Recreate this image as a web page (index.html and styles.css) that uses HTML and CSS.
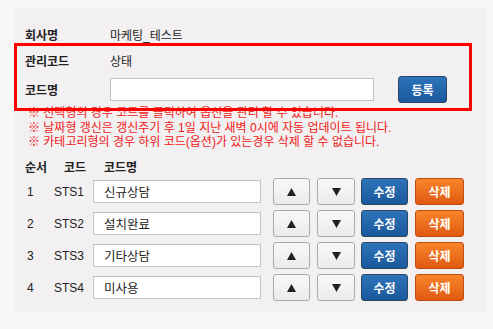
FILE: index.html
```html
<!DOCTYPE html>
<html lang="ko">
<head>
<meta charset="utf-8">
<link rel="stylesheet" href="styles.css">
</head>
<body>
<div class="panel">
  <div class="info-row r1">
    <span class="label">회사명</span>
    <span class="value">마케팅_테스트</span>
  </div>
  <div class="info-row r2">
    <span class="label">관리코드</span>
    <span class="value">상태</span>
  </div>
  <div class="info-row r3">
    <span class="label">코드명</span>
    <input class="field name-field" type="text">
    <button class="btn btn-blue btn-reg">등록</button>
  </div>
  <div class="notes">
    <p>※ 선택형의 경우 코드를 클릭하여 옵션을 관리 할 수 있습니다.</p>
    <p>※ 날짜형 갱신은 갱신주기 후 1일 지난 새벽 0시에 자동 업데이트 됩니다.</p>
    <p>※ 카테고리형의 경우 하위 코드(옵션)가 있는경우 삭제 할 수 없습니다.</p>
  </div>
  <div class="list-head">
    <span class="h-num">순서</span>
    <span class="h-code">코드</span>
    <span class="h-name">코드명</span>
  </div>
  <div class="list">
    <div class="list-row">
      <span class="c-num">1</span><span class="c-code">STS1</span>
      <input class="field row-field" type="text" value="신규상담">
      <button class="btn btn-gray btn-up"><svg width="9" height="8" viewBox="0 0 9 8"><polygon points="4.5,0 9,8 0,8" fill="#222"/></svg></button>
      <button class="btn btn-gray btn-down"><svg width="9" height="8" viewBox="0 0 9 8"><polygon points="0,0 9,0 4.5,8" fill="#222"/></svg></button>
      <button class="btn btn-blue btn-edit">수정</button>
      <button class="btn btn-orange btn-del">삭제</button>
    </div>
    <div class="list-row">
      <span class="c-num">2</span><span class="c-code">STS2</span>
      <input class="field row-field" type="text" value="설치완료">
      <button class="btn btn-gray btn-up"><svg width="9" height="8" viewBox="0 0 9 8"><polygon points="4.5,0 9,8 0,8" fill="#222"/></svg></button>
      <button class="btn btn-gray btn-down"><svg width="9" height="8" viewBox="0 0 9 8"><polygon points="0,0 9,0 4.5,8" fill="#222"/></svg></button>
      <button class="btn btn-blue btn-edit">수정</button>
      <button class="btn btn-orange btn-del">삭제</button>
    </div>
    <div class="list-row">
      <span class="c-num">3</span><span class="c-code">STS3</span>
      <input class="field row-field" type="text" value="기타상담">
      <button class="btn btn-gray btn-up"><svg width="9" height="8" viewBox="0 0 9 8"><polygon points="4.5,0 9,8 0,8" fill="#222"/></svg></button>
      <button class="btn btn-gray btn-down"><svg width="9" height="8" viewBox="0 0 9 8"><polygon points="0,0 9,0 4.5,8" fill="#222"/></svg></button>
      <button class="btn btn-blue btn-edit">수정</button>
      <button class="btn btn-orange btn-del">삭제</button>
    </div>
    <div class="list-row">
      <span class="c-num">4</span><span class="c-code">STS4</span>
      <input class="field row-field" type="text" value="미사용">
      <button class="btn btn-gray btn-up"><svg width="9" height="8" viewBox="0 0 9 8"><polygon points="4.5,0 9,8 0,8" fill="#222"/></svg></button>
      <button class="btn btn-gray btn-down"><svg width="9" height="8" viewBox="0 0 9 8"><polygon points="0,0 9,0 4.5,8" fill="#222"/></svg></button>
      <button class="btn btn-blue btn-edit">수정</button>
      <button class="btn btn-orange btn-del">삭제</button>
    </div>
  </div>
  <div class="highlight"></div>
</div>
</body>
</html>
```

FILE: styles.css
```css
html, body {
  margin: 0;
  padding: 0;
}
body {
  background: #f7f6f6;
  font-family: "Liberation Sans", "Noto Sans CJK KR", sans-serif;
  font-size: 12px;
  color: #222;
  width: 493px;
  height: 329px;
  overflow: hidden;
}
.panel {
  position: relative;
  box-sizing: border-box;
  margin: 7px 0 0 15px;
  width: 472px;
  height: 305px;
  background: #f2f0f1;
  padding: 14px 0 0 10px;
}
.info-row {
  display: flex;
  align-items: center;
  height: 26px;
}
.info-row.r3 {
  height: 33px;
}
.label {
  width: 85px;
  font-weight: bold;
  color: #222;
}
.value {
  color: #222;
}
.field {
  box-sizing: border-box;
  height: 23px;
  border: 1px solid #c3c3c3;
  background: #fff;
  font-family: "Liberation Sans", "Noto Sans CJK KR", sans-serif;
  font-size: 12px;
  color: #222;
  padding: 0 0 0 10px;
  margin: 0;
  outline: none;
}
.name-field {
  width: 264px;
}
.btn {
  box-sizing: border-box;
  height: 27px;
  border-radius: 3px;
  font-family: "Noto Sans CJK KR", sans-serif;
  font-size: 12px;
  font-weight: bold;
  padding: 0;
  margin: 0;
  display: inline-flex;
  align-items: center;
  justify-content: center;
}
.btn-blue {
  color: #fff;
  background: linear-gradient(#2e74bb, #1a589c);
  border: 1px solid #2c4766;
}
.btn-orange {
  color: #fff;
  background: linear-gradient(#f7852a, #e05a12);
  border: 1px solid #bf4d10;
}
.btn-gray {
  background: linear-gradient(#f8f8f8, #ebebeb);
  border: 1px solid #a9a9a9;
}
.btn-reg {
  width: 49px;
  margin-left: 24px;
}
.notes {
  margin-left: 3px;
  color: #f01818;
  font-family: "Liberation Sans", "Noto Sans CJK KR", sans-serif;
  font-size: 12px;
}
.notes p {
  margin: 0;
  height: 14.5px;
  line-height: 14.5px;
  white-space: nowrap;
}
.list-head {
  display: flex;
  align-items: center;
  height: 18px;
  margin-top: 8px;
  font-weight: bold;
}
.h-num {
  width: 39px;
}
.h-code {
  width: 40px;
}
.list-row {
  display: flex;
  align-items: center;
  height: 32px;
}
.c-num {
  width: 29px;
  padding-left: 2px;
  box-sizing: border-box;
}
.c-code {
  width: 39px;
}
.row-field {
  width: 168px;
  font-size: 12.5px;
}
.btn-up {
  width: 37px;
  margin-left: 12px;
}
.btn-down {
  width: 38px;
  margin-left: 7px;
}
.btn-edit {
  width: 47px;
  margin-left: 6px;
}
.btn-del {
  width: 49px;
  margin-left: 7px;
}
.highlight {
  position: absolute;
  left: -1px;
  top: 36px;
  width: 458px;
  height: 68px;
  box-sizing: border-box;
  border: 3px solid #ff0000;
  pointer-events: none;
}
```
